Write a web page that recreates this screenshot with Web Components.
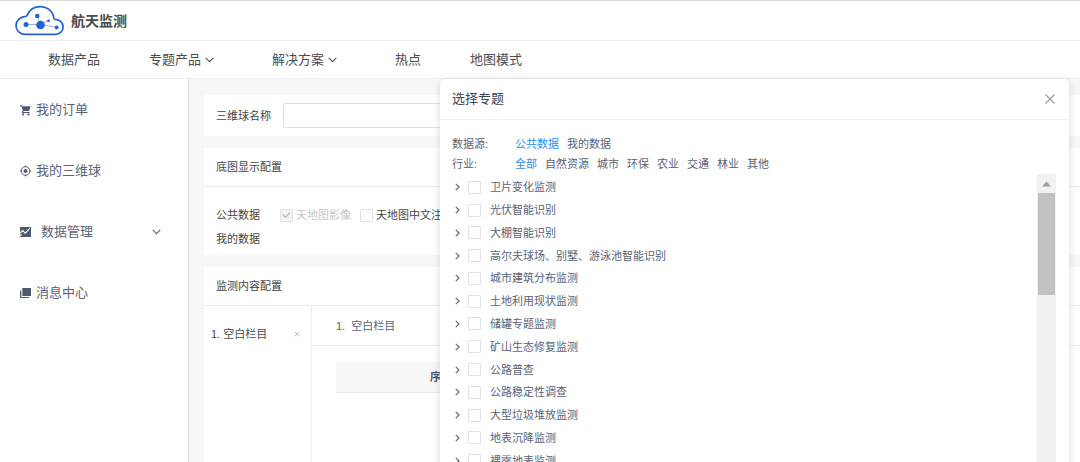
<!DOCTYPE html>
<html lang="zh-CN">
<head>
<meta charset="utf-8">
<title>航天监测</title>
<style>
  body { margin: 0; font: 11px/16px "Liberation Sans", "Noto Sans CJK SC", sans-serif; color: #606266; background: #fff; overflow: hidden; }
</style>
</head>
<body>
<monitor-app></monitor-app>
<script>
const define = (name, html, setup) => {
  const tpl = document.createElement('template');
  tpl.innerHTML = '<style>*{box-sizing:border-box}button{font:inherit;color:inherit;border:0;background:none;padding:0;cursor:pointer}a{color:inherit;text-decoration:none}svg{display:block;flex:none}</style>' + html;
  customElements.define(name, class extends HTMLElement {
    constructor() {
      super();
      this.attachShadow({ mode: 'open' }).append(tpl.content.cloneNode(true));
    }
    connectedCallback() { if (setup) setup(this, this.shadowRoot); }
  });
};

define('app-header', `
<style>
  :host { display: flex; align-items: center; gap: 7px; height: 41px; padding: 0 15px; border-top: 1px solid #dedede; border-bottom: 1px solid #ececec; }
  h1 { margin: 0; font-size: 14px; line-height: 20px; color: #4a4a4a; }
</style>
<svg width="49" height="32" viewBox="0 0 49 32" fill="none" stroke="#2463cf" stroke-width="1.700">
  <path d="M10.500 29.300h30c4.400 0 7.600-3.200 7.600-7.300 0-4.300-3.300-7.500-8-7.700-.4-.1-1-.2-1.200-.6C38.300 6.500 32.300 1.600 25.300 1.600c-6 0-11 3.500-13.200 8.700-.3.700-.8 1-1.500 1.100C5 12 1 15.600 1 20.400c0 5.200 4 8.900 9.500 8.900z"/>
  <path d="M11 19.500h14.500L42 22.500M22 11l3.500 8.500 8-4" stroke-width=".5"/>
  <g fill="#2463cf" stroke="none"><circle cx="11" cy="19.500" r="2.500"/><circle cx="22.300" cy="11" r="2.300"/><circle cx="25.500" cy="20" r="4.300"/><circle cx="33.500" cy="15.800" r="1.400"/><circle cx="41.700" cy="22.500" r="1.900"/></g>
</svg>
<h1><slot></slot></h1>`);

define('nav-link', `
<style>
  :host { display: block; }
  a { display: flex; align-items: center; gap: 4px; font-size: 13px; line-height: 20px; color: #4c4c4c; }
  svg { display: none; margin-right: 9px; }
  :host([menu]) svg { display: block; }
</style>
<a href="#"><slot></slot><svg width="9" height="6" viewBox="0 0 9 6" fill="none" stroke="#555" stroke-width="1.200"><path d="M.7.8l3.800 3.800L8.300.8"/></svg></a>`);

define('top-nav', `
<style>
  :host { display: block; }
  nav { display: flex; align-items: center; gap: 49px; height: 38px; padding: 0 48px; border-bottom: 1px solid #eee; }
</style>
<nav><slot></slot></nav>`);

define('side-link', `
<style>
  :host { display: block; }
  a { display: flex; align-items: center; gap: 5px; height: 61px; padding: 0 27px 0 19px; font-size: 13px; line-height: 20px; color: #5a6275; }
  :host([menu]) a { gap: 10px; }
  .arrow { display: none; margin-left: auto; }
  :host([menu]) .arrow { display: block; }
</style>
<a href="#"><svg class="icon" width="12" height="12" viewBox="0 0 12 12"></svg><slot></slot>
<svg class="arrow" width="9" height="6" viewBox="0 0 9 6" fill="none" stroke="#666" stroke-width="1.200"><path d="M.7.8l3.800 3.800L8.300.8"/></svg></a>`,
(el, root) => {
  const c = '#4f586e';
  const icons = {
    cart: `<path fill="${c}" d="M1 1.200h2l.5 1h8.200L10 7H4.600l-.5.900h6.400V9H3l-.3-.9 1-1.700L2.400 2.200H1z"/><circle cx="4.200" cy="10.400" r="1.100" fill="${c}"/><circle cx="9.500" cy="10.400" r="1.100" fill="${c}"/>`,
    target: `<circle cx="6.500" cy="6" r="4.300" fill="none" stroke="${c}"/><circle cx="6.500" cy="6" r="2" fill="${c}"/><path stroke="${c}" d="M6.500.5V2M6.500 10v1.500M.9 6h1.500M10.600 6h1.400"/>`,
    data: `<path fill="${c}" d="M1 1h11v10H1z"/><path fill="none" stroke="#fff" stroke-width="1.100" d="M.8 7.300l2.800-2.800 2.700 2.700 4.700-5M.8 10l2-1.500"/>`,
    message: `<path fill="${c}" d="M3.300 1H12v8H3.300z"/><path fill="${c}" d="M1 3.500h1.300V10H10v1H1z"/>`
  };
  root.querySelector('.icon').innerHTML = icons[el.getAttribute('icon')];
});

define('side-menu', `
<style>:host { display: block; width: 189px; flex: none; background: #fff; border-right: 1px solid #e0e1e4; }</style>
<nav><slot></slot></nav>`);

define('check-box', `
<style>
  :host { display: inline-flex; }
  label { display: flex; align-items: center; gap: var(--gap, 3px); color: var(--label, #444); white-space: nowrap; }
  input { appearance: none; width: 13px; height: 13px; margin: 0; border: 1px solid #dfe1e6; border-radius: 1px; background: #fff; display: grid; place-items: center; }
  input:disabled { background: #f3f3f3; }
  input:disabled ~ span { color: #c5c5c5; }
  input:checked::after { content: ""; width: 6px; height: 3px; border: solid #aaa; border-width: 0 0 1px 1px; transform: translateY(-1px) rotate(-45deg); }
</style>
<label><input type="checkbox"><span><slot></slot></span></label>`,
(el, root) => {
  const box = root.querySelector('input');
  box.checked = el.hasAttribute('checked');
  box.disabled = el.hasAttribute('disabled');
});

define('config-card', `
<style>
  :host { display: block; background: #fff; }
  h2 { margin: 0; height: 39px; padding: 0 12px; font-size: 11px; font-weight: 400; line-height: 38px; color: #444; border-bottom: 1px solid #ebeef2; }
</style>
<h2></h2><slot></slot>`,
(el, root) => { root.querySelector('h2').textContent = el.getAttribute('heading'); });

define('name-field', `
<style>
  :host { display: block; background: #fff; }
  label { display: flex; align-items: center; gap: 12px; height: 41px; padding: 0 12px; color: #444; white-space: nowrap; }
  input { flex: 1; min-width: 0; height: 25px; border: 1px solid #dcdfe6; border-radius: 2px; font: inherit; padding: 0 8px; }
</style>
<label><slot></slot><input type="text"></label>`);

define('basemap-options', `
<style>
  :host { display: grid; gap: 8px; padding: 20px 12px 8px; color: #444; }
  div { display: flex; align-items: center; gap: 9px; }
  .name { width: 55px; flex: none; }
</style>
<div><span class="name">公共数据</span><check-box checked disabled>天地图影像</check-box><check-box>天地图中文注记</check-box></div>
<div><span class="name">我的数据</span></div>`);

define('content-editor', `
<style>
  :host { display: flex; min-height: 160px; color: #4a4a4a; }
  aside { width: 108px; flex: none; border-right: 1px solid #ebeef2; padding: 20px 11px 0 7px; }
  .item { display: flex; justify-content: space-between; align-items: center; }
  section { flex: 1; }
  h3 { margin: 0; height: 40px; padding: 0 24px; display: flex; gap: 6px; font-size: 11px; font-weight: 400; line-height: 40px; color: #5a6275; border-bottom: 1px solid #ebeef2; }
  .wrap { padding: 16px 24px; }
  table { width: 100%; border-collapse: collapse; table-layout: fixed; }
  th { height: 30px; padding: 0; background: #f7f7f8; border-bottom: 1px solid #e8eaec; color: #4c5466; }
  th:first-child { width: 210px; }
</style>
<aside><div class="item"><span>1. 空白栏目</span><button aria-label="删除"><svg width="6" height="6" viewBox="0 0 6 6" stroke="#bbb" stroke-width=".9"><path d="M.7.7l4.600 4.600M5.300.7L.7 5.300"/></svg></button></div></aside>
<section><h3><span>1.</span><span>空白栏目</span></h3><div class="wrap"><table><thead><tr><th>序号</th><th></th></tr></thead></table></div></section>`);

define('filter-row', `
<style>
  :host { display: flex; line-height: 20px; color: #5a6275; }
  .name { width: 63px; flex: none; }
  .options { display: flex; gap: 8px; }
  button.on { color: #2d8cf0; }
</style>
<span class="name"></span><div class="options"></div>`,
(el, root) => {
  root.querySelector('.name').textContent = el.getAttribute('name');
  root.querySelector('.options').append(...el.getAttribute('options').split(' ').map((text, i) => {
    const b = document.createElement('button');
    b.textContent = text;
    if (!i) b.className = 'on';
    return b;
  }));
});

define('topic-row', `
<style>
  :host { display: flex; align-items: center; gap: 8px; --gap: 9px; --label: #5a6275; }
  button { display: block; }
</style>
<button aria-label="展开"><svg width="5" height="8" viewBox="0 0 5 8" fill="none" stroke="#5f6779" stroke-width="1.200"><path d="M.8.9L4 4 .8 7.100"/></svg></button><check-box><slot></slot></check-box>`);

define('scroll-rail', `
<style>
  :host { display: block; width: 19px; background: #f1f1f1; padding: 0 1px; }
  svg { margin: 0 auto; }
  .thumb { height: 102px; background: #c1c1c1; }
</style>
<svg width="9" height="19" viewBox="0 0 9 19"><path d="M0 12.500L4.500 7.500 9 12.500z" fill="#a0a0a0"/></svg><div class="thumb"></div>`);

define('topic-dialog', `
<style>
  :host { display: flex; flex-direction: column; background: #fff; border-radius: 5px 5px 0 0; box-shadow: 0 1px 8px rgba(0,0,0,.14); overflow: hidden; }
  header { display: flex; align-items: center; justify-content: space-between; flex: none; height: 41px; padding: 0 14px 0 12px; border-bottom: 1px solid #f0f0f2; }
  h2 { margin: 0; font-size: 13px; font-weight: 400; line-height: 20px; color: #3c4353; }
  .filters { padding: 14px 12px 0; }
  .body { display: flex; flex: 1; justify-content: space-between; padding-right: 13px; }
  .list { display: grid; grid-auto-rows: 1fr; height: 296px; margin-top: 2px; padding-left: 15px; }
</style>
<header><h2>选择专题</h2><button aria-label="关闭"><svg width="10" height="10" viewBox="0 0 10 10" stroke="#999" stroke-width="1.100"><path d="M.5.5l9 9M9.500.5l-9 9"/></svg></button></header>
<div class="filters">
  <filter-row name="数据源:" options="公共数据 我的数据"></filter-row>
  <filter-row name="行业:" options="全部 自然资源 城市 环保 农业 交通 林业 其他"></filter-row>
</div>
<div class="body">
  <div class="list">
    <topic-row>卫片变化监测</topic-row><topic-row>光伏智能识别</topic-row><topic-row>大棚智能识别</topic-row>
    <topic-row>高尔夫球场、别墅、游泳池智能识别</topic-row><topic-row>城市建筑分布监测</topic-row><topic-row>土地利用现状监测</topic-row>
    <topic-row>储罐专题监测</topic-row><topic-row>矿山生态修复监测</topic-row><topic-row>公路普查</topic-row>
    <topic-row>公路稳定性调查</topic-row><topic-row>大型垃圾堆放监测</topic-row><topic-row>地表沉降监测</topic-row><topic-row>裸露地表监测</topic-row>
  </div>
  <scroll-rail></scroll-rail>
</div>`);

define('monitor-app', `
<style>
  :host { display: flex; flex-direction: column; height: 100vh; overflow: hidden; position: relative; }
  .page { display: flex; flex: 1; min-height: 0; }
  main { flex: 1; min-width: 0; display: flex; flex-direction: column; gap: 12px; padding: 16px 0 0 15px; background: #f5f7f9; }
  .fill { flex: 1; }
  topic-dialog { position: absolute; top: 79px; left: 440px; right: 11px; }
</style>
<app-header>航天监测</app-header>
<top-nav><nav-link>数据产品</nav-link><nav-link menu>专题产品</nav-link><nav-link menu>解决方案</nav-link><nav-link>热点</nav-link><nav-link>地图模式</nav-link></top-nav>
<div class="page">
  <side-menu><side-link icon="cart">我的订单</side-link><side-link icon="target">我的三维球</side-link><side-link icon="data" menu>数据管理</side-link><side-link icon="message">消息中心</side-link></side-menu>
  <main>
    <name-field>三维球名称</name-field>
    <config-card heading="底图显示配置"><basemap-options></basemap-options></config-card>
    <config-card class="fill" heading="监测内容配置"><content-editor></content-editor></config-card>
  </main>
</div>
<topic-dialog role="dialog" aria-label="选择专题"></topic-dialog>`);
</script>
</body>
</html>
